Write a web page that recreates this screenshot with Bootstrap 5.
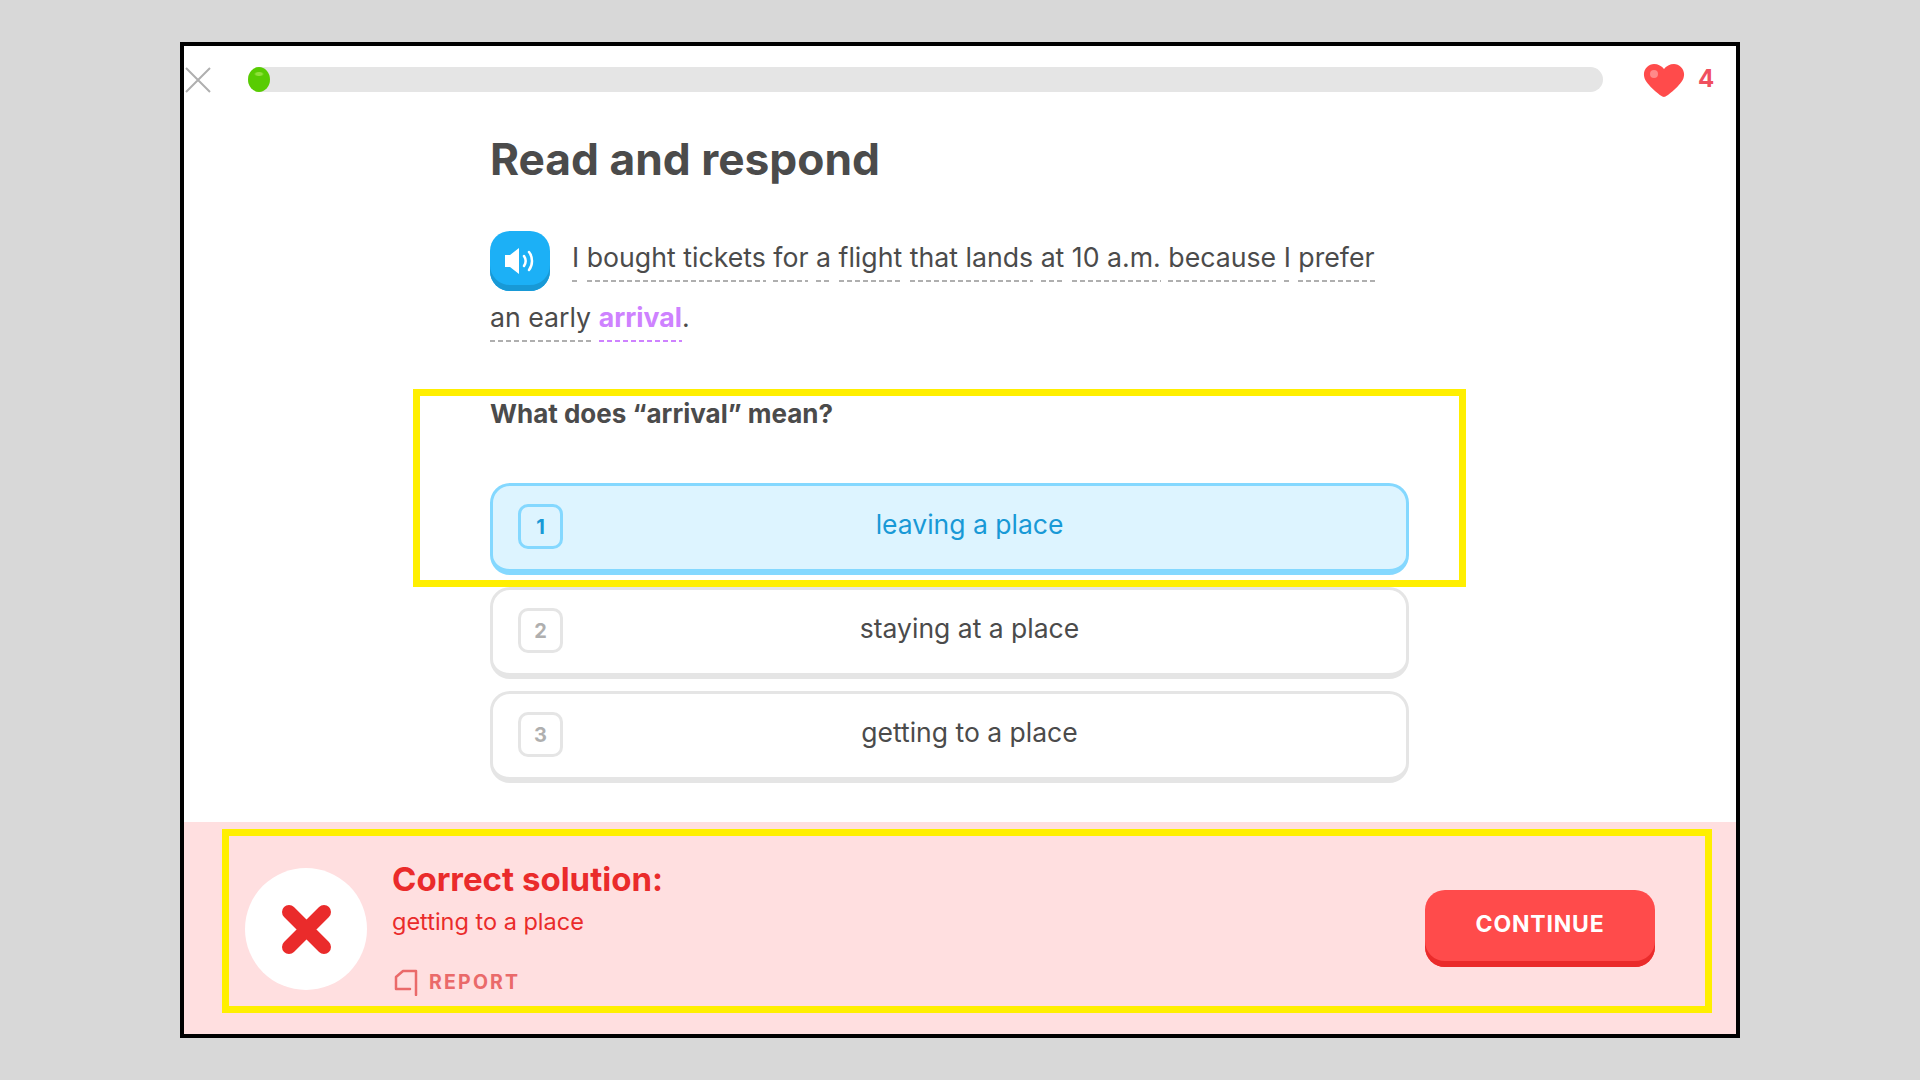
<!doctype html>
<html lang="en">
<head>
<meta charset="utf-8">
<title>Read and respond</title>
<link href="https://cdn.jsdelivr.net/npm/bootstrap@5.3.0/dist/css/bootstrap.min.css" rel="stylesheet">
<style>
html,body{height:100%}
body{background:#d8d8d8;font-family:Inter,Roboto,"Liberation Sans",sans-serif;color:#4b4b4b;padding-top:42px}
.lesson-frame{width:1560px;height:996px;border:4px solid #000;background:#fff;margin:0 auto}
.top-row{height:50px;margin-top:21px;padding-left:1px;padding-right:18px}
.close-ico{width:26px;height:26px;flex:none}
.track{flex:none;width:1355px;height:25px;margin-left:37px;margin-right:40px;background:#e5e5e5;border-radius:13px}
.track-dot{display:block;width:22px;height:25px;border-radius:50%;background:radial-gradient(ellipse 5px 2.5px at 50% 28%,#8fe03a 60%,#58cc02 100%)}
.heart-ico{width:42px;height:34px;flex:none;margin-top:-4px}
.life-num{color:#f0505f;font-weight:700;font-size:24px;margin-left:13px;line-height:1}
.lesson-body{padding-left:306px}
.lesson-title{font-size:44.3px;font-weight:700;line-height:52px;margin:16px 0 0;color:#4b4b4b}
.prompt{width:920px;font-size:26.7px;line-height:60px;margin-top:42px}
.sound-btn{display:inline-flex;width:60px;height:60px;border:0;padding:0;border-radius:20px;background:#1cb0f6;box-shadow:inset 0 -6px 0 #1899d6;align-items:center;justify-content:center;margin:4px 22px -4px 0;vertical-align:top}
.wd{padding-bottom:9px;background-image:repeating-linear-gradient(90deg,#afafaf 0 5px,transparent 5px 8px);background-size:100% 2px;background-position:left bottom;background-repeat:no-repeat}
.wd-new{color:#ce82ff;font-weight:700;background-image:repeating-linear-gradient(90deg,#ce82ff 0 5px,transparent 5px 8px)}
.focus-box{width:1053px;margin-left:-77px;margin-top:42px;height:198px;border:7px solid #ffef00;padding-left:70px;padding-top:2px}
.ask{font-size:26px;font-weight:700;line-height:32px;margin:0 0 53px}
.pick{width:919px;height:92px;background:#fff;border:3px solid #e5e5e5;border-bottom-width:6px;border-radius:20px;padding-left:25px;padding-right:30px;font-size:26.5px;color:#4b4b4b}
.pick-key{width:45px;height:45px;flex:none;border:3px solid #e5e5e5;border-radius:10px;font-size:20px;font-weight:700;color:#afafaf;margin-top:-2px}
.pick-text{flex:1;text-align:center;padding-bottom:6px}
.pick-on{background:#ddf4ff;border-color:#84d8ff;color:#1899d6}
.pick-on .pick-key{border-color:#84d8ff;color:#1899d6}
.pick-list{gap:12px;width:919px}
.verdict{height:212px;margin-top:auto;background:#ffdfe0;padding:7px 0 0 38px}
.focus-foot{width:1490px;height:184px;border:7px solid #ffef00;padding-left:16px}
.no-circle{width:122px;height:122px;background:#fff;border-radius:50%;flex:none;margin-top:32px}
.verdict-copy{margin-left:25px;padding-top:23px}
.verdict-title{font-size:33px;font-weight:700;color:#ea2b2b;line-height:40px;margin:0}
.verdict-sub{font-size:23.5px;color:#ea2b2b;line-height:30px;margin:8px 0 0}
.report-link{color:#ea6a6a;font-size:19.5px;font-weight:700;letter-spacing:2.2px;margin-top:31px;line-height:28px;padding-left:2px}
.go-btn{width:230px;height:77px;background:#ff4b4b;color:#fff;border:0;border-radius:20px;box-shadow:inset 0 -6px 0 #ea2b2b;font-size:23px;font-weight:700;letter-spacing:.8px;margin:54px 50px 0 auto;padding:0 0 8px}
</style>
</head>
<body>
<div class="lesson-frame d-flex flex-column">
  <div class="top-row d-flex align-items-start">
    <svg class="close-ico" viewBox="0 0 26 26"><path d="M1 1 25 25M25 1 1 25" stroke="#afafaf" stroke-width="2" fill="none"/></svg>
    <div class="track"><span class="track-dot"></span></div>
    <svg class="heart-ico" viewBox="0 0 42 34"><path d="M21 34C18 34 3 21 1.500 15 -1 7 5 1 11 1c4 0 8 2 10 5 2-3 6-5 10-5 6 0 12 6 9.500 14C39 21 24 34 21 34Z" fill="#ff4b4b"/><circle cx="11" cy="11" r="4" fill="#ff8a8a"/></svg>
    <span class="life-num">4</span>
  </div>
  <div class="lesson-body">
    <h1 class="lesson-title">Read and respond</h1>
    <div class="prompt">
      <button class="sound-btn" type="button" aria-label="Play"><svg width="32" height="26" viewBox="0 0 32 26"><path d="M1 7h5l9-7v26l-9-7H1Z" fill="#fff"/><path d="M20 8c2 3 2 7 0 10M25 4c4 5 4 13 0 18" stroke="#fff" stroke-width="2.500" fill="none" stroke-linecap="round"/></svg></button><span class="wd">I</span> <span class="wd">bought tickets</span> <span class="wd">for</span> <span class="wd">a</span> <span class="wd">flight</span> <span class="wd">that lands</span> <span class="wd">at</span> <span class="wd">10 a.m.</span> <span class="wd">because</span> <span class="wd">I</span> <span class="wd">prefer</span><br><span class="wd">an early</span> <span class="wd wd-new">arrival</span>.
    </div>
    <div class="focus-box">
      <p class="ask">What does “arrival” mean?</p>
      <div class="pick pick-on d-flex align-items-center"><span class="pick-key d-flex align-items-center justify-content-center">1</span><span class="pick-text">leaving a place</span></div>
    </div>
    <div class="pick-list d-flex flex-column">
      <div class="pick d-flex align-items-center"><span class="pick-key d-flex align-items-center justify-content-center">2</span><span class="pick-text">staying at a place</span></div>
      <div class="pick d-flex align-items-center"><span class="pick-key d-flex align-items-center justify-content-center">3</span><span class="pick-text">getting to a place</span></div>
    </div>
  </div>
  <div class="verdict">
    <div class="focus-foot d-flex align-items-start">
      <div class="no-circle d-flex align-items-center justify-content-center"><svg width="52" height="50" viewBox="0 0 52 50"><path d="M9 8 44 43M44 8 9 43" stroke="#ea2b2b" stroke-width="14" stroke-linecap="round" fill="none"/></svg></div>
      <div class="verdict-copy">
        <h2 class="verdict-title">Correct solution:</h2>
        <p class="verdict-sub">getting to a place</p>
        <div class="report-link d-flex align-items-center gap-2"><svg width="27" height="28" viewBox="0 0 27 28"><path d="M22 27V3H9L2 9v12h14" stroke="#ea6a6a" stroke-width="2.500" fill="none" stroke-linejoin="round" stroke-linecap="round"/></svg>REPORT</div>
      </div>
      <button class="go-btn" type="button">CONTINUE</button>
    </div>
  </div>
</div>
<script src="https://cdn.jsdelivr.net/npm/bootstrap@5.3.0/dist/js/bootstrap.bundle.min.js"></script>
</body>
</html>
